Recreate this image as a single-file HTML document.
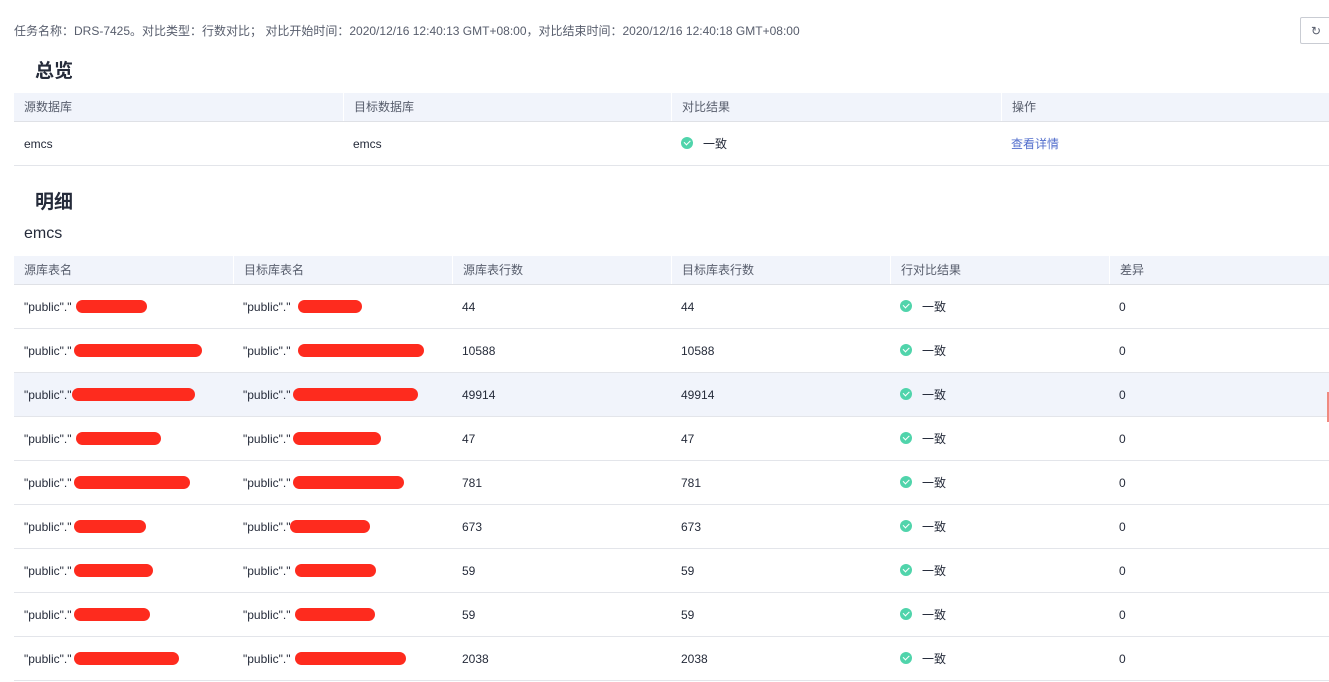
<!DOCTYPE html>
<html><head><meta charset="utf-8"><style>
body{margin:0;width:1329px;height:668px;overflow:hidden;background:#fff;font-family:"Liberation Sans","Noto Sans CJK SC",sans-serif;color:#252b3a;font-size:12px;position:relative}
.a{position:absolute}
.hd{position:absolute;background:#f1f4fb;height:28px;border-bottom:1px solid #dfe1e6}
.hc{position:absolute;top:0;height:28px;line-height:28px;padding-left:10px;color:#575d6c;border-left:1px solid #fff;box-sizing:border-box}
.row{position:absolute;left:14px;width:1315px;height:44px;border-bottom:1px solid #e3e5ea;box-sizing:border-box}
.c{position:absolute;top:0;line-height:45px;padding-left:10px}
.ok{display:inline-block;width:12px;height:12px;border-radius:50%;background:#50d4ab;vertical-align:-1px;margin-right:10px;position:relative}
.ok:after{content:"";position:absolute;left:3px;top:3px;width:5px;height:2.5px;border-left:1.5px solid #fff;border-bottom:1.5px solid #fff;transform:rotate(-45deg)}
.r{position:absolute;height:13px;background:#fe2b1e;border-radius:7px}
</style></head><body>
<div class="a" style="left:14px;top:22px;color:#575d6c">任务名称：DRS-7425。对比类型：行数对比； 对比开始时间：2020/12/16 12:40:13 GMT+08:00，对比结束时间：2020/12/16 12:40:18 GMT+08:00</div>
<div class="a" style="left:1300px;top:17px;width:32px;height:27px;border:1px solid #c9ccd3;border-radius:2px;box-sizing:border-box;text-align:center;line-height:26px;color:#575d6c;font-size:12px">↻</div>
<div class="a" style="left:35px;top:56px;font-size:19px;font-weight:bold">总览</div>
<div class="hd" style="left:14px;top:93px;width:1315px">
<div class="hc" style="left:0;width:329px;border-left:none">源数据库</div>
<div class="hc" style="left:329px;width:328px">目标数据库</div>
<div class="hc" style="left:657px;width:330px">对比结果</div>
<div class="hc" style="left:987px;width:328px">操作</div></div>
<div class="row" style="top:122px">
<div class="c" style="left:0">emcs</div><div class="c" style="left:329px">emcs</div>
<div class="c" style="left:657px"><span class="ok"></span>一致</div>
<div class="c" style="left:987px;color:#526ecc">查看详情</div></div>
<div class="a" style="left:35px;top:187px;font-size:19px;font-weight:bold">明细</div>
<div class="a" style="left:24px;top:225px;font-size:16px">emcs</div>
<div class="hd" style="left:14px;top:256px;width:1315px">
<div class="hc" style="left:0;width:219px;border-left:none">源库表名</div>
<div class="hc" style="left:219px;width:219px">目标库表名</div>
<div class="hc" style="left:438px;width:219px">源库表行数</div>
<div class="hc" style="left:657px;width:219px">目标库表行数</div>
<div class="hc" style="left:876px;width:219px">行对比结果</div>
<div class="hc" style="left:1095px;width:220px">差异</div></div>
<div id="rows"></div>
<script>
var d=[[44,76,147,298,362],[10588,74,202,298,424],[49914,72,195,293,418],[47,76,161,293,381],[781,74,190,293,404],[673,74,146,290,370],[59,74,153,295,376],[59,74,150,295,375],[2038,74,179,295,406]];
var h='';d.forEach(function(r,i){var t=285+i*44;
h+='<div class="row" style="top:'+t+'px;'+(i==2?'background:#f1f4fb':'')+'"><div class="c" style="left:0">"public"."&nbsp;&nbsp;&nbsp;&nbsp;&nbsp;&nbsp;&nbsp;&nbsp;&nbsp;&nbsp;&nbsp;&nbsp;&nbsp;&nbsp;&nbsp;"</div><div class="c" style="left:219px">"public"."&nbsp;&nbsp;&nbsp;&nbsp;&nbsp;&nbsp;&nbsp;&nbsp;&nbsp;&nbsp;&nbsp;&nbsp;&nbsp;&nbsp;"</div><div class="c" style="left:438px">'+r[0]+'</div><div class="c" style="left:657px">'+r[0]+'</div><div class="c" style="left:876px"><span class="ok"></span>一致</div><div class="c" style="left:1095px">0</div></div>';
h+='<div class="r" style="top:'+(t+15)+'px;left:'+r[1]+'px;width:'+(r[2]-r[1])+'px"></div><div class="r" style="top:'+(t+15)+'px;left:'+r[3]+'px;width:'+(r[4]-r[3])+'px"></div>';});
document.getElementById('rows').innerHTML=h;
</script>
<div class="a" style="left:1327px;top:392px;width:2px;height:30px;background:#f08a80"></div>
</body></html>
